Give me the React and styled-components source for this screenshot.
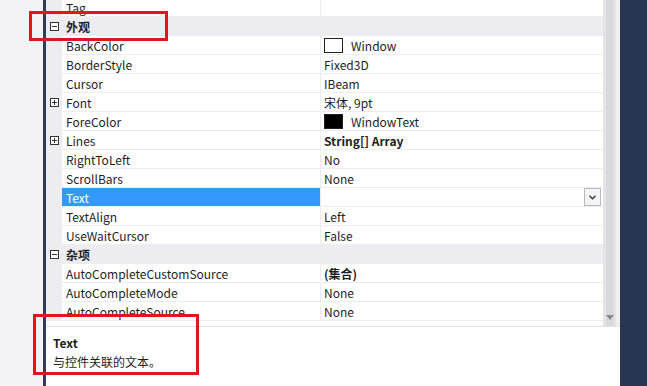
import React from "react";
import styled, { createGlobalStyle } from "styled-components";

const GlobalStyle = createGlobalStyle`
  html, body {
    margin: 0;
    padding: 0;
    overflow: hidden;
    background: #f3f3f5;
  }
`;

const FONT = `"Noto Sans CJK SC", "Noto Sans", "Liberation Sans", sans-serif`;

/* ===== layout ===== */

const Page = styled.div`
  position: relative;
  width: 647px;
  height: 386px;
  display: flex;
  font-family: ${FONT};
  font-size: 12px;
  color: #1e1e1e;
  overflow: hidden;
`;

const LeftStrip = styled.div`
  width: 43px;
  background: #f3f3f5;
`;

const Divider = styled.div`
  width: 3px;
  background: #333c55;
`;

const Panel = styled.div`
  width: 574px;
  display: flex;
  flex-direction: column;
  background: #ffffff;
`;

const NavyPanel = styled.div`
  flex: 1;
  background: #283652;
`;

const GridArea = styled.div`
  height: 327px;
  display: flex;
  border-bottom: 1px solid #e2e2e8;
  box-sizing: border-box;
`;

const Grid = styled.div`
  flex: 1;
  overflow: hidden;
  background: #ffffff;
`;

const Rows = styled.div`
  margin-top: -2px;
  display: flex;
  flex-direction: column;
`;

/* ===== rows ===== */

const CategoryRow = styled.div`
  height: 19px;
  display: flex;
  align-items: center;
  background: #ececf1;
  font-weight: 700;
`;

const PropRow = styled.div`
  height: 19px;
  display: grid;
  grid-template-columns: 16px 259px 1fr;
`;

const Gutter = styled.div`
  width: 16px;
  height: 100%;
  display: flex;
  align-items: center;
  justify-content: center;
  background: #ececf1;
  flex-shrink: 0;
`;

const NameCell = styled.div`
  display: flex;
  align-items: center;
  padding-left: 4px;
  white-space: nowrap;
  overflow: hidden;
  border-bottom: 1px solid #ededf0;
  border-right: 1px solid #ededf0;
  background: ${(p) => (p.$selected ? "#3399ff" : "#ffffff")};
  color: ${(p) => (p.$selected ? "#ffffff" : "#1e1e1e")};
`;

const CategoryLabel = styled.span`
  padding-left: 4px;
`;

const ValueCell = styled.div`
  display: flex;
  align-items: center;
  gap: 8px;
  padding-left: 3px;
  padding-right: 2px;
  white-space: nowrap;
  border-bottom: 1px solid #ededf0;
  font-weight: ${(p) => (p.$bold ? 700 : 400)};
`;

const Swatch = styled.span`
  width: 17px;
  height: 13px;
  border: 1px solid #222;
  background: ${(p) => p.$color};
`;

const DropButton = styled.span`
  margin-left: auto;
  width: 15px;
  height: 16px;
  border: 1px solid #b8b8c0;
  background: #f4f4f6;
  display: flex;
  align-items: center;
  justify-content: center;
`;

const BoxIcon = ({ plus }) => (
  <svg width="9" height="9" viewBox="0 0 9 9" aria-hidden="true">
    <rect x="0.5" y="0.5" width="8" height="8" fill="#fff" stroke="#333" />
    <path d="M2 4.5h5" stroke="#333" />
    {plus && <path d="M4.5 2v5" stroke="#333" />}
  </svg>
);

/* ===== scrollbar ===== */

const ScrollBar = styled.div`
  width: 17px;
  display: flex;
  flex-direction: column;
  align-items: center;
  background: linear-gradient(90deg, #e4e4e8 0 3px, #d9d9dd 3px 11px, #e4e4e8 11px 13px, #f0f0f3 13px);
  padding-bottom: 6px;
  box-sizing: border-box;
`;

const Thumb = styled.div`
  flex: 1;
`;

const DownArrow = styled.div`
  width: 0;
  height: 0;
  margin-right: 4px;
  border-left: 4px solid transparent;
  border-right: 4px solid transparent;
  border-top: 5px solid #8a8a90;
`;

/* ===== description ===== */

const Description = styled.div`
  flex: 1;
  padding: 7px 7px;
  display: flex;
  flex-direction: column;
  gap: 1px;
  line-height: 18px;
`;

const DescTitle = styled.div`
  font-weight: 700;
`;

/* ===== annotations ===== */

const RedBox = styled.div`
  position: absolute;
  border: 3px solid #e5141b;
  box-sizing: border-box;
  pointer-events: none;
`;

const props = [
  { name: "Tag", value: "" },
  { category: "外观" },
  { name: "BackColor", value: "Window", swatch: "#ffffff" },
  { name: "BorderStyle", value: "Fixed3D" },
  { name: "Cursor", value: "IBeam" },
  { name: "Font", value: "宋体, 9pt", expand: true },
  { name: "ForeColor", value: "WindowText", swatch: "#000000" },
  { name: "Lines", value: "String[] Array", expand: true, bold: true },
  { name: "RightToLeft", value: "No" },
  { name: "ScrollBars", value: "None" },
  { name: "Text", value: "", selected: true },
  { name: "TextAlign", value: "Left" },
  { name: "UseWaitCursor", value: "False" },
  { category: "杂项" },
  { name: "AutoCompleteCustomSource", value: "(集合)", bold: true },
  { name: "AutoCompleteMode", value: "None" },
  { name: "AutoCompleteSource", value: "None" },
];

export default function App() {
  return (
    <>
      <GlobalStyle />
      <Page>
        <LeftStrip />
        <Divider />
        <Panel>
          <GridArea>
            <Grid>
              <Rows>
                {props.map((p, i) =>
                  p.category ? (
                    <CategoryRow key={i}>
                      <Gutter>
                        <BoxIcon />
                      </Gutter>
                      <CategoryLabel>{p.category}</CategoryLabel>
                    </CategoryRow>
                  ) : (
                    <PropRow key={i}>
                      <Gutter>{p.expand && <BoxIcon plus />}</Gutter>
                      <NameCell $selected={p.selected}>{p.name}</NameCell>
                      <ValueCell $bold={p.bold}>
                        {p.swatch && <Swatch $color={p.swatch} />}
                        {p.value}
                        {p.selected && (
                          <DropButton>
                            <svg width="7" height="5" viewBox="0 0 7 5" aria-hidden="true">
                              <path d="M0.5 0.8L3.5 3.8L6.5 0.8" fill="none" stroke="#333" strokeWidth="1.3" />
                            </svg>
                          </DropButton>
                        )}
                      </ValueCell>
                    </PropRow>
                  )
                )}
              </Rows>
            </Grid>
            <ScrollBar>
              <Thumb />
              <DownArrow />
            </ScrollBar>
          </GridArea>
          <Description>
            <DescTitle>Text</DescTitle>
            <div>与控件关联的文本。</div>
          </Description>
        </Panel>
        <NavyPanel />

        <RedBox style={{ left: 29, top: 11, width: 139, height: 30 }} />
        <RedBox style={{ left: 33, top: 314, width: 166, height: 61 }} />
      </Page>
    </>
  );
}
